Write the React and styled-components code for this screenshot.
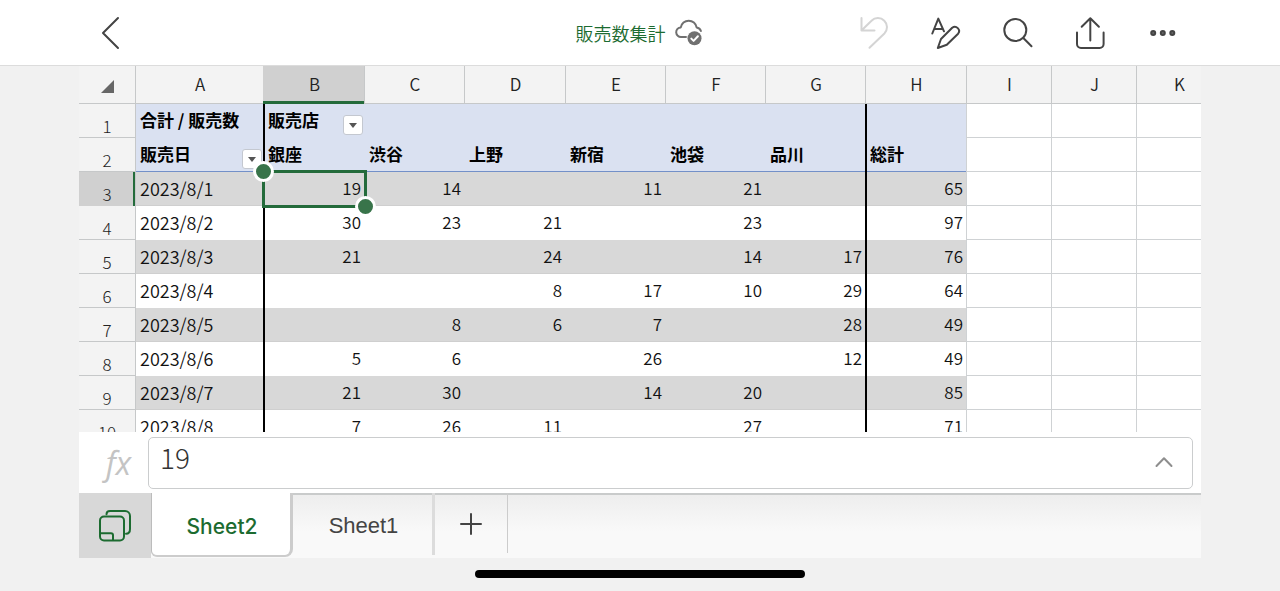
import React, { useState } from 'react';
import styled, { createGlobalStyle, css } from 'styled-components';

const sans = '"Noto Sans CJK JP", "Noto Sans", sans-serif';

const GlobalStyle = createGlobalStyle`
  * {
    box-sizing: border-box;
  }
  body {
    margin: 0;
    background-color: #f1f1f1;
    font-family: ${sans};
  }
  button, textarea {
    font: inherit;
    color: inherit;
    border: 0;
    margin: 0;
    padding: 0;
    background: none;
  }
`

const Page = styled.div`
  display: flex;
  flex-direction: column;
  height: 100vh;
`

const TopBar = styled.header`
  display: grid;
  grid-template-columns: 1fr auto 1fr;
  align-items: center;
  height: 66px;
  flex: none;
  padding: 0 82px 0 74px;
  background-color: #fff;
  border-bottom: 1px solid #dcdcdc;
`

const Title = styled.h1`
  display: flex;
  align-items: center;
  gap: 7px;
  margin: 0;
  padding-left: 8px;
  font-size: 18px;
  line-height: 24px;
  font-weight: 350;
  color: #1c6b30;
`

const Actions = styled.div`
  display: flex;
  justify-content: flex-end;
`

const IconButton = styled.button`
  display: flex;
  align-items: center;
  justify-content: center;
  width: 72px;
  height: 64px;
  color: ${props => props.$faded ? '#d4d4d4' : '#444'};
`

const Icon = styled.svg.attrs({ fill: 'none', stroke: 'currentColor' })`
  display: block;
  flex: none;
  stroke-width: 2;
  stroke-linecap: round;
  stroke-linejoin: round;
`

const Workbook = styled.main`
  display: flex;
  flex-direction: column;
  flex: 1;
  min-height: 0;
  margin: 0 79px;
`

const GridArea = styled.div`
  flex: 1;
  min-height: 0;
  overflow: hidden;
  background-color: #fff;
`

const Sheet = styled.table`
  table-layout: fixed;
  width: 1142px;
  border-collapse: separate;
  border-spacing: 0;
  font-size: 17px;
  line-height: 24px;
`

const ColumnHead = styled.th`
  height: 38px;
  padding: 0 0 3px 2px;
  font-weight: 350;
  color: #222;
  background-color: ${props => props.$active ? '#d0d0d0' : '#f3f3f3'};
  box-shadow: ${props => props.$active
    ? 'inset 0 -3px #246b3b'
    : 'inset 0 -1px #c6c8c9, inset 1px 0 #c6c8c9'};
`

const Corner = styled.td`
  padding: 2px 0 0 22px;
  background-color: #f3f3f3;
  box-shadow: inset 0 -1px #c6c8c9;
`

const RowHead = styled.th`
  height: 34px;
  padding: 10px 0 0;
  font-weight: 300;
  color: #222;
  background-color: ${props => props.$active ? '#d0d0d0' : '#f3f3f3'};
  box-shadow: ${props => props.$active
    ? 'inset -2px 0 #246b3b'
    : 'inset 0 -1px #c6c8c9'};
`

// lines are inset shadows so that the black rules run unbroken from row to row
const Cell = styled.td`
  --left: #cfd2d4;
  --bottom: #cfd2d4;
  position: relative;
  height: 34px;
  padding: 0 3px 3px 5px;
  text-align: right;
  white-space: nowrap;
  font-weight: 350;
  color: #111;
  background-color: #fff;
  box-shadow: inset 1px 0 var(--left), inset 0 -1px var(--bottom);

  ${props => props.$kind === 'heading' && css`
    --left: transparent;
    --bottom: ${props.$last ? '#7390c8' : 'transparent'};
    text-align: left;
    font-weight: 700;
    color: #000;
    background-color: #dae1f1;
  `}
  ${props => props.$kind === 'shaded' && css`
    --left: transparent;
    --bottom: #cfcfcf;
    background-color: #d8d8d8;
  `}
  ${props => props.$kind === 'plain' && css`
    --left: transparent;
    --bottom: transparent;
  `}
  ${props => props.$first && css`
    --left: #c6c8c9;
    text-align: left;
  `}
  ${props => props.$first && props.$kind !== 'heading' && css`
    font-size: 18px;
  `}
  ${props => props.$ruled && css`
    box-shadow: inset 2px 0 #000, inset 0 -1px var(--bottom);
  `}
`

const FilterButton = styled.button`
  position: absolute;
  right: 1px;
  bottom: 3px;
  display: flex;
  align-items: center;
  justify-content: center;
  width: 20px;
  height: 20px;
  border: 1px solid #c4c8d0;
  border-radius: 3px;
  background-color: #fff;
`

const Selection = styled.span`
  position: absolute;
  z-index: 1;
  inset: -2px -3px -2px -1px;
  border: 3px solid #246b3b;
`

const Handle = styled.i`
  position: absolute;
  width: 21px;
  height: 21px;
  border: 3px solid #fff;
  border-radius: 50%;
  background-color: #38744a;
  ${props => props.$end ? 'right: -12px; bottom: -12px;' : 'left: -12px; top: -12px;'}
`

const FormulaBar = styled.div`
  display: flex;
  align-items: center;
  flex: none;
  height: 61px;
  padding-right: 8px;
  background-color: #fff;
`

const FxLabel = styled.label`
  width: 69px;
  padding-left: 10px;
  text-align: center;
  font-family: "Open Sans", sans-serif;
  font-style: italic;
  font-size: 32px;
  line-height: 40px;
  color: #c4c4c4;
`

const FormulaBox = styled.div`
  display: flex;
  flex: 1;
  height: 52px;
  border: 1px solid #cbcdce;
  border-radius: 5px;
`

const FormulaInput = styled.textarea`
  flex: 1;
  height: 48px;
  padding: 0 11px;
  resize: none;
  overflow: hidden;
  outline: none;
  font-size: 28px;
  line-height: 38px;
  font-weight: 300;
  color: #333;
`

const ExpandButton = styled.button`
  display: flex;
  align-items: center;
  justify-content: center;
  width: 56px;
  padding-bottom: 2px;
  color: #8e8e8e;
`

const TabBar = styled.nav`
  display: flex;
  flex: none;
  height: 65px;
  background: linear-gradient(#ededed, #f9f9f9 60%);
  box-shadow: inset 0 2px #c9cbcb;
`

const SheetsButton = styled.button`
  display: flex;
  align-items: center;
  justify-content: center;
  width: 72px;
  background-color: #d8d8d8;
  color: #1c6b30;
`

const Tab = styled.button`
  width: 142px;
  height: 62px;
  padding: 4px 0 0 2px;
  font-family: "Liberation Sans", sans-serif;
  font-size: 22px;
  color: #444;
  border-right: 3px solid #dcdcdc;

  ${props => props.$active && css`
    height: 64px;
    font-family: Inter, "Liberation Sans", sans-serif;
    font-size: 21px;
    font-weight: 500;
    color: #1c6b30;
    background-color: #fff;
    border-left: 1px solid #bcbcbc;
    border-right: 3px solid #ccc;
    border-bottom: 2px solid #ccc;
    border-radius: 0 0 8px 6px;
  `}
`

const AddTab = styled.button`
  display: flex;
  align-items: center;
  justify-content: center;
  width: 73px;
  height: 60px;
  padding-top: 2px;
  color: #444;
  border-right: 1px solid #ccc;
`

const HomeArea = styled.footer`
  display: flex;
  justify-content: center;
  flex: none;
  height: 33px;
  padding-top: 12px;
`

const HomeIndicator = styled.div`
  width: 330px;
  height: 8px;
  border-radius: 4px;
  background-color: #000;
`

const columns = [
  { name: 'A', width: 128 },
  { name: 'B', width: 101 },
  { name: 'C', width: 100 },
  { name: 'D', width: 101 },
  { name: 'E', width: 100 },
  { name: 'F', width: 100 },
  { name: 'G', width: 100 },
  { name: 'H', width: 101 },
  { name: 'I', width: 85 },
  { name: 'J', width: 85 },
  { name: 'K', width: 85 }
]

const rows = [
  ['合計 / 販売数', '販売店', '', '', '', '', '', ''],
  ['販売日', '銀座', '渋谷', '上野', '新宿', '池袋', '品川', '総計'],
  ['2023/8/1', 19, 14, '', 11, 21, '', 65],
  ['2023/8/2', 30, 23, 21, '', 23, '', 97],
  ['2023/8/3', 21, '', 24, '', 14, 17, 76],
  ['2023/8/4', '', '', 8, 17, 10, 29, 64],
  ['2023/8/5', '', 8, 6, 7, '', 28, 49],
  ['2023/8/6', 5, 6, '', 26, '', 12, 49],
  ['2023/8/7', 21, 30, '', 14, 20, '', 85],
  ['2023/8/8', 7, 26, 11, '', 27, '', 71]
]

const selected = { row: 2, col: 1 }

const cellKind = (row, col) => {
  if (col > 7) return 'empty'
  if (row < 2) return 'heading'
  return row % 2 === 0 ? 'shaded' : 'plain'
}

const hasFilter = (row, col) => (row === 0 && col === 1) || (row === 1 && col === 0)

const Toolbar = () => (
  <TopBar>
    <IconButton aria-label="戻る">
      <Icon width="36" height="36" viewBox="0 0 36 36"><path d="M26 3L11 18l15 15" /></Icon>
    </IconButton>
    <Title>
      販売数集計
      <Icon width="32" height="36" viewBox="0 0 32 36" color="#707070">
        <path d="M13 22H8.2a4.8 4.8 0 0 1-.4-9.6a8 8 0 0 1 15.8 0a5.2 5.2 0 0 1 4.3 3.6" />
        <circle cx="21.5" cy="23.3" r="7" fill="currentColor" stroke="none" />
        <path stroke="#fff" d="M18.3 23.6l2.3 2.3 4.3-4.7" />
      </Icon>
    </Title>
    <Actions>
      <IconButton $faded aria-label="元に戻す">
        <Icon width="36" height="36" viewBox="0 0 36 36">
          <path d="M5.5 3v12.5h13M5.5 15.5L15.5 5.8A9 9 0 0 1 28.4 18.5L13.5 32.8" />
        </Icon>
      </IconButton>
      <IconButton aria-label="書式">
        <Icon width="36" height="36" viewBox="0 0 36 36">
          <path d="M4.3 18.5L10.3 3.6L16 16.3M6.2 14h8.6" />
          <path d="M9.8 33L13 24L24.2 12.8a4.2 4.2 0 0 1 5.9 5.9L18.8 29.8z" />
        </Icon>
      </IconButton>
      <IconButton aria-label="検索">
        <Icon width="36" height="36" viewBox="0 0 36 36">
          <circle cx="15.3" cy="15" r="11" />
          <path d="M23.3 23L31.5 31.2" />
        </Icon>
      </IconButton>
      <IconButton aria-label="共有">
        <Icon width="36" height="36" viewBox="0 0 36 36">
          <path d="M18.3 25.5V3.2M9.7 11.8l8.6-8.6 8.6 8.6M5 17.5V29a4 4 0 0 0 4 4h18.6a4 4 0 0 0 4-4V17.5" />
        </Icon>
      </IconButton>
      <IconButton aria-label="その他">
        <Icon width="36" height="36" viewBox="0 0 36 36">
          <circle cx="9.2" cy="18" r="2" fill="#666" />
          <circle cx="18.8" cy="18" r="2" fill="#666" />
          <circle cx="28.3" cy="18" r="2" fill="#666" />
        </Icon>
      </IconButton>
    </Actions>
  </TopBar>
)

const Grid = () => (
  <GridArea>
    <Sheet>
      <colgroup>
        <col width="56" />
        {columns.map(column => <col key={column.name} width={column.width} />)}
      </colgroup>
      <thead>
        <tr>
          <Corner>
            <Icon width="13" height="13" viewBox="0 0 13 13">
              <path d="M13 0V13H0z" fill="#666" stroke="none" />
            </Icon>
          </Corner>
          {columns.map((column, col) => (
            <ColumnHead key={column.name} scope="col" $active={col === selected.col}>{column.name}</ColumnHead>
          ))}
        </tr>
      </thead>
      <tbody>
        {rows.map((values, row) => (
          <tr key={row}>
            <RowHead scope="row" $active={row === selected.row}>{row + 1}</RowHead>
            {columns.map((column, col) => (
              <Cell
                key={column.name}
                $kind={cellKind(row, col)}
                $first={col === 0}
                $last={row === 1}
                $ruled={col === 1 || col === 7}
              >
                {values[col]}
                {hasFilter(row, col) && (
                  <FilterButton aria-label="フィルター">
                    <Icon width="8" height="5" viewBox="0 0 8 5">
                      <path d="M0 0H8L4 5z" fill="#555" stroke="none" />
                    </Icon>
                  </FilterButton>
                )}
                {row === selected.row && col === selected.col && (
                  <Selection><Handle /><Handle $end /></Selection>
                )}
              </Cell>
            ))}
          </tr>
        ))}
      </tbody>
    </Sheet>
  </GridArea>
)

const Formula = () => {
  const [value, setValue] = useState('19')
  return (
    <FormulaBar>
      <FxLabel htmlFor="formula">fx</FxLabel>
      <FormulaBox>
        <FormulaInput id="formula" rows="1" value={value} onChange={e => setValue(e.target.value)} />
        <ExpandButton aria-label="展開">
          <Icon width="18" height="12" viewBox="0 0 18 12"><path d="M1.5 10L9 2.2L16.5 10" /></Icon>
        </ExpandButton>
      </FormulaBox>
    </FormulaBar>
  )
}

const Tabs = () => {
  const [active, setActive] = useState('Sheet2')
  return (
    <TabBar>
      <SheetsButton aria-label="シート一覧">
        <Icon width="36" height="36" viewBox="0 0 36 36">
          <rect x="3" y="8.5" width="24" height="24" rx="4" />
          <path d="M9.5 6.3C9.5 4 11 3 13 3H28a5 5 0 0 1 5 5V21c0 3-1.5 4.8-4 4.8" />
          <path d="M3.5 25.2H14a2 2 0 0 1 2 2V32" />
        </Icon>
      </SheetsButton>
      {['Sheet2', 'Sheet1'].map(name => (
        <Tab key={name} $active={name === active} onClick={() => setActive(name)}>{name}</Tab>
      ))}
      <AddTab aria-label="シートを追加">
        <Icon width="24" height="24" viewBox="0 0 24 24"><path d="M12 2v20M2 12h20" /></Icon>
      </AddTab>
    </TabBar>
  )
}

const App = () => {
  return (
    <Page>
      <GlobalStyle />
      <Toolbar />
      <Workbook>
        <Grid />
        <Formula />
        <Tabs />
      </Workbook>
      <HomeArea>
        <HomeIndicator />
      </HomeArea>
    </Page>
  )
}

export default App;
